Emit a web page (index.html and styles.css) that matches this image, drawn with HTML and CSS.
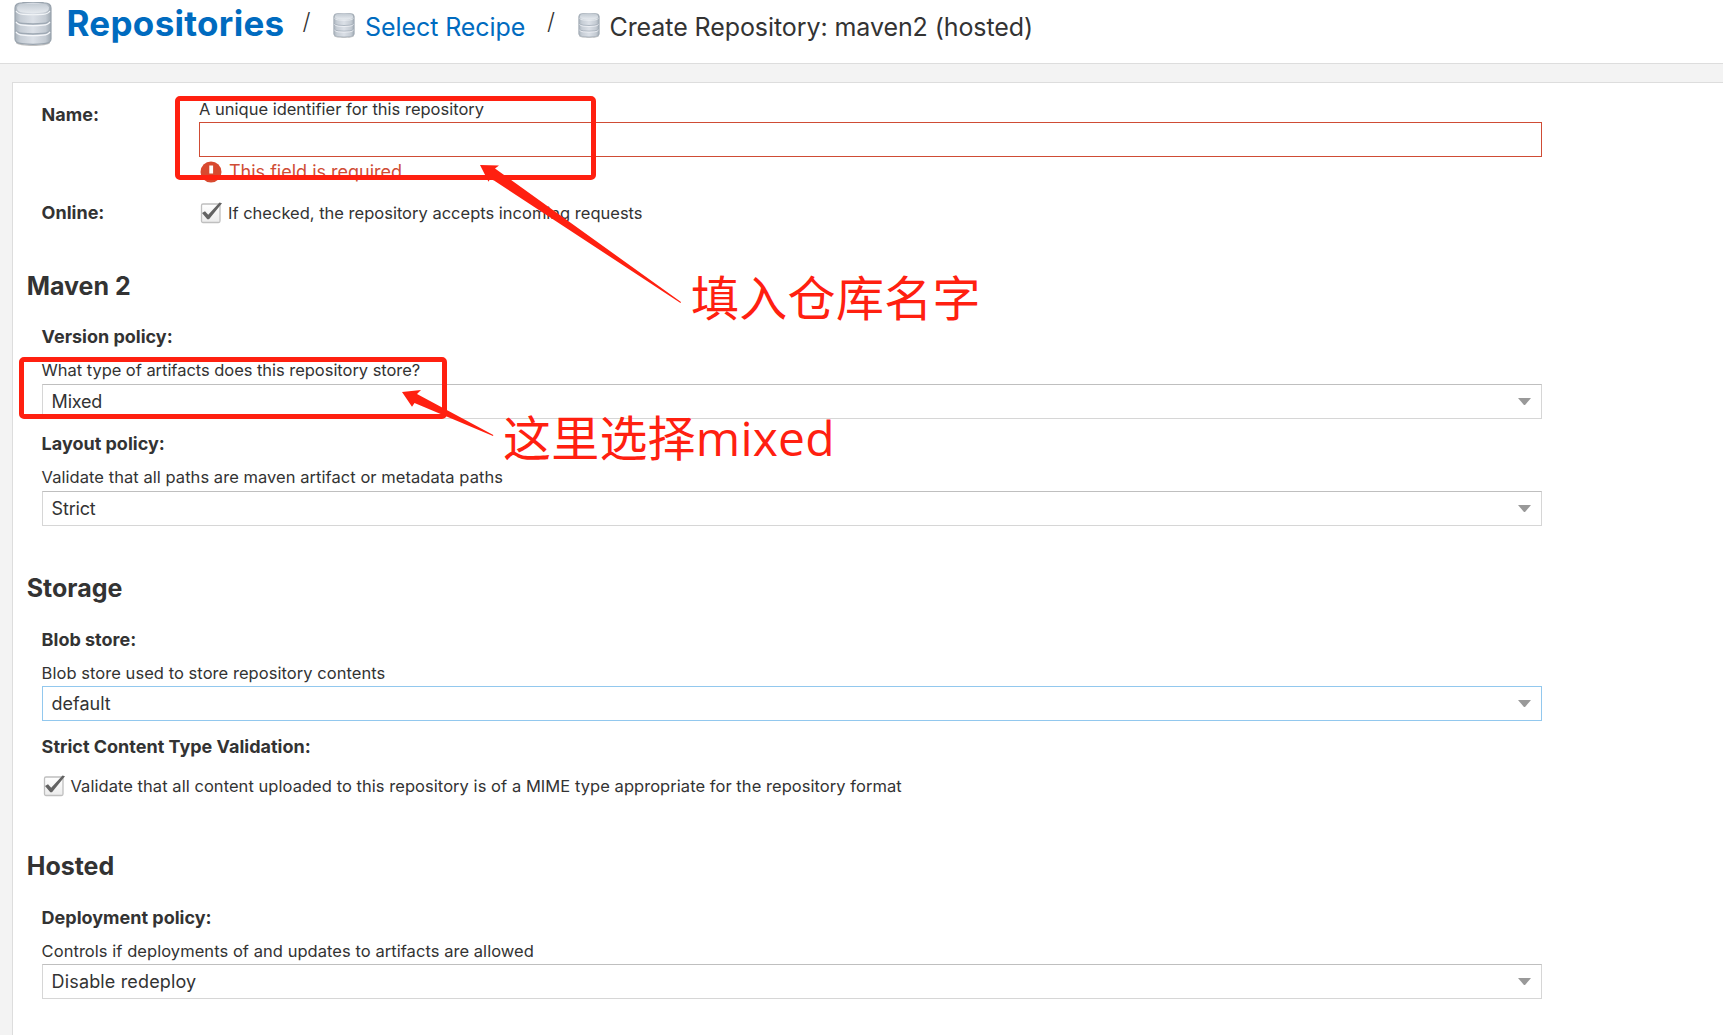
FILE: index.html
```html
<!DOCTYPE html>
<html lang="en">
<head>
<meta charset="utf-8">
<title>Create Repository</title>
<link rel="stylesheet" href="styles.css">
</head>
<body>
<svg class="defs" width="0" height="0" aria-hidden="true">
  <defs>
    <linearGradient id="metal" x1="0" x2="1" y1="0" y2="0">
      <stop offset="0" stop-color="#a9b3bc"/>
      <stop offset=".15" stop-color="#c6cdd5"/>
      <stop offset=".5" stop-color="#dbe0e7"/>
      <stop offset=".85" stop-color="#c3cad2"/>
      <stop offset="1" stop-color="#9fa9b2"/>
    </linearGradient>
    <linearGradient id="lid" x1="0" x2="0" y1="0" y2="1">
      <stop offset="0" stop-color="#c3cbd3"/>
      <stop offset="1" stop-color="#e6eaef"/>
    </linearGradient>
    <linearGradient id="box" x1="0" x2="0" y1="0" y2="1">
      <stop offset="0" stop-color="#ffffff"/>
      <stop offset="1" stop-color="#ececec"/>
    </linearGradient>
    <symbol id="db" viewBox="0 0 38 44">
      <path d="M2 39c2 5 32 5 34 0v2c-2 4-32 4-34 0z" fill="#777" opacity=".45"/>
      <path d="M1 6Q1 1 8 .8Q19-.6 30 .8Q37 1 37 6V37Q37 41 30 41.6Q19 43 8 41.6Q1 41 1 37Z" fill="url(#metal)" stroke="#9aa4ae" stroke-width="1.2"/>
      <path d="M3 5.500Q4 2.500 9 2.300Q19 1.200 29 2.300Q34 2.500 35 5.500Q35 10 29 10.600Q19 11.600 9 10.600Q3 10 3 5.500Z" fill="url(#lid)"/>
      <path d="M2 9Q4 12 9 12.300Q19 13.200 29 12.300Q34 12 36 9" fill="none" stroke="#f2f5f8" stroke-width="1.200"/>
      <path d="M1.500 18Q3 21 9 21.500Q19 22.500 29 21.500Q35 21 36.500 18M1.500 28Q3 31 9 31.500Q19 32.500 29 31.500Q35 31 36.500 28" fill="none" stroke="#9fa9b4" stroke-width="1.400"/>
      <path d="M2 19.800Q4 22.800 9 23.200Q19 24.200 29 23.200Q34 22.800 36 19.800M2 29.800Q4 32.800 9 33.200Q19 34.200 29 33.200Q34 32.800 36 29.800" fill="none" stroke="#f4f6f9" stroke-width="1.300"/>
    </symbol>
    <symbol id="check" viewBox="0 0 22 22">
      <rect x="1.500" y="2" width="18.500" height="18.500" rx="1.500" fill="url(#box)" stroke="#bfbfbf" stroke-width="1.300"/>
      <path d="M2 11L5 9.200l3.200 3.600L19.500.6 22 1.200 9 17.200 7.300 17.200Z" fill="#636363"/>
    </symbol>
  </defs>
</svg>

<header class="header">
  <svg class="db-large"><use href="#db"/></svg>
  <a class="title">Repositories</a>
  <span class="slash">/</span>
  <svg class="db-small"><use href="#db"/></svg>
  <a class="crumb link">Select Recipe</a>
  <span class="slash second">/</span>
  <svg class="db-small"><use href="#db"/></svg>
  <span class="crumb current">Create Repository: maven2 (hosted)</span>
</header>

<main class="panel">
  <div class="row name-row">
    <div class="label name-label">Name:</div>
    <div class="control">
      <div class="hint id-hint">A unique identifier for this repository</div>
      <div class="field invalid"></div>
      <div class="error">
        <svg class="error-icon" viewBox="0 0 22 22"><circle cx="11" cy="11" r="10.500" fill="#d8492f"/><path d="M9.300 4.500h3.800v8H9.300zM9.300 14.500h3.800v3H9.300z" fill="#fff"/></svg>
        <span>This field is required</span>
      </div>
    </div>
  </div>
  <div class="row online-row">
    <div class="label">Online:</div>
    <div class="check-row"><svg class="checkbox"><use href="#check"/></svg><span class="online-text">If checked, the repository accepts incoming requests</span></div>
  </div>

  <section class="section maven">
    <h2>Maven 2</h2>
    <div class="group">
      <div class="label">Version policy:</div>
      <div class="hint type-hint">What type of artifacts does this repository store?</div>
      <div class="field select"><span class="mixed">Mixed</span><i class="arrow"></i></div>
    </div>
    <div class="group">
      <div class="label">Layout policy:</div>
      <div class="hint">Validate that all paths are maven artifact or metadata paths</div>
      <div class="field select"><span class="mixed">Strict</span><i class="arrow"></i></div>
    </div>
  </section>

  <section class="section storage">
    <h2>Storage</h2>
    <div class="group">
      <div class="label">Blob store:</div>
      <div class="hint">Blob store used to store repository contents</div>
      <div class="field select focused"><span>default</span><i class="arrow"></i></div>
    </div>
    <div class="group validation">
      <div class="label">Strict Content Type Validation:</div>
      <div class="check-row"><svg class="checkbox"><use href="#check"/></svg><span>Validate that all content uploaded to this repository is of a MIME type appropriate for the repository format</span></div>
    </div>
  </section>

  <section class="section hosted">
    <h2>Hosted</h2>
    <div class="group">
      <div class="label">Deployment policy:</div>
      <div class="hint">Controls if deployments of and updates to artifacts are allowed</div>
      <div class="field select"><span class="wide">Disable redeploy</span><i class="arrow"></i></div>
    </div>
  </section>
</main>

<div class="annotations">
  <svg width="1723" height="1035" viewBox="0 0 1723 1035">
    <g fill="none" stroke="#ff2010" stroke-width="5">
      <rect x="177.500" y="98.500" width="416" height="79" rx="2.500"/>
      <rect x="21.500" y="359.500" width="423" height="57" rx="2.500"/>
    </g>
    <g fill="#ff2010">
      <path d="M480 165L499 165.500L495 168.500L681 302L680.500 303L494 180.500L490 179L488.500 181.700Z"/>
      <path d="M402 392L421 390L417 394L493.300 435L493 436L414.500 403L412 406.700Z"/>
    </g>
  </svg>
  <div class="note note-name">填入仓库名字</div>
  <div class="note note-mixed">这里选择<span>mixed</span></div>
</div>
</body>
</html>
```
FILE: styles.css
```css
* { box-sizing: border-box; }
html, body { height: 100%; }
body {
  margin: 0;
  position: relative;
  overflow: hidden;
  background: #f3f3f3;
  color: #333;
  font-family: Inter, "Open Sans", sans-serif;
  display: flex;
  flex-direction: column;
}
svg { display: block; flex: none; }
.defs { position: absolute; }

.header {
  flex: none;
  height: 64px;
  display: flex;
  align-items: flex-start;
  background: #fff;
  border-bottom: 1px solid #ddd;
  padding-left: 14px;
  white-space: nowrap;
}
.db-large { width: 38px; height: 44px; margin-top: 2px; }
.title {
  width: 222px;
  margin: 3px 0 0 14.5px;
  font-size: 35px;
  line-height: 40px;
  font-weight: 700;
  letter-spacing: .3px;
  color: #006bbf;
}
.slash {
  width: 10px;
  margin: 7px 0 0 14px;
  font-size: 23px;
  line-height: 30px;
  font-weight: 350;
}
.db-small { width: 22px; height: 25px; margin: 13px 0 0 20.500px; }
.crumb { margin: 12px 0 0 10px; font-size: 25px; line-height: 30px; letter-spacing: -.08px; }
.crumb.link { width: 169.500px; color: #006bbf; }
.slash.second { margin-left: 12.500px; }

.panel {
  flex: 1;
  margin: 18px 0 0 12px;
  border: solid #ddd;
  border-width: 1px 0 0 1px;
  background: #fff;
  padding: 16px 181px 0 28px;
  min-height: 0;
  overflow: hidden;
}
.row { display: grid; grid-template-columns: 158px 1fr; }
.name-row { height: 104px; }
.name-label { padding-top: 6px; }
.label {
  padding-left: .6px;
  font-size: 18px;
  line-height: 20px;
  font-weight: 700;
}
.hint, .check-row {
  font-size: 16.500px;
  line-height: 20px;
  font-weight: 370;
  white-space: nowrap;
  letter-spacing: .05px;
}
.id-hint { letter-spacing: 0; }
.type-hint { letter-spacing: -.04px; }
.field {
  height: 35px;
  border: 1px solid #d6d6d6;
  border-top-color: #bfbfbf;
  background: #fff;
}
.field.invalid { margin-top: 3px; border-color: #cf4c35; }
.field.focused { border-color: #92c8ee; }
.error {
  display: flex;
  gap: 7px;
  padding: 4px 0 0 1px;
  color: #cf4c35;
  font-size: 18px;
  font-weight: 370;
  line-height: 22px;
}
.error-icon { width: 22px; height: 22px; }
.check-row { display: flex; gap: 6px; padding-left: 1px; height: 20px; }
.online-text { letter-spacing: 0; }
.checkbox { width: 22px; height: 22px; margin-top: -1px; }

.section h2 {
  margin: 0 0 0 -14.300px;
  font-size: 25px;
  line-height: 30px;
  font-weight: 700;
}
.maven { padding-top: 48px; }
.storage { padding-top: 47px; }
.hosted { padding-top: 55px; }
.group { padding-top: 15px; }
.section h2 + .group { padding-top: 27px; }
.maven h2 + .group { padding-top: 26px; }
.group .hint { padding: 13px 0 0 .6px; height: 36px; }
.maven .group .hint { height: 37px; }
.group .field { margin-left: 1px; }
.validation { padding-top: 16px; }
.group .check-row { margin-top: 19px; padding-left: 1.500px; }
.select {
  display: flex;
  align-items: center;
  justify-content: space-between;
  padding: 0 10px 0 8.600px;
  font-size: 18px;
  font-weight: 370;
}
.mixed { letter-spacing: -.2px; }
.wide { letter-spacing: .15px; }
.arrow {
  width: 13px;
  height: 7px;
  background: #999;
  clip-path: polygon(0 0, 100% 0, 54% 100%, 46% 100%);
}

.annotations { position: absolute; inset: 0; }
.note {
  position: absolute;
  color: #ff2010;
  font: 400 48px/60px "Noto Sans CJK SC", sans-serif;
  white-space: nowrap;
}
.note-name { left: 691px; top: 265px; letter-spacing: .3px; }
.note-mixed { left: 503px; top: 405px; letter-spacing: .2px; }
.note-mixed span { font-family: "Open Sans", sans-serif; }
```
